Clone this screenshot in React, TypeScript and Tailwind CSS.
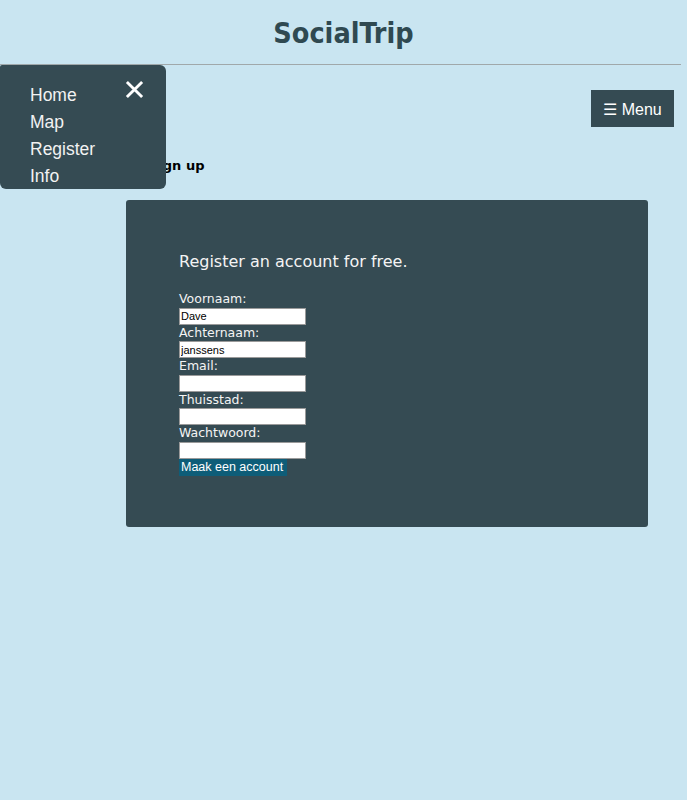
import { useState } from 'react';

const FIELDS = [
  { label: 'Voornaam:', value: 'Dave' },
  { label: 'Achternaam:', value: 'janssens' },
  { label: 'Email:', value: '' },
  { label: 'Thuisstad:', value: '' },
  { label: 'Wachtwoord:', value: '', type: 'password' },
];

const NAV = ['Home', 'Map', 'Register', 'Info'];

export default function App() {
  const [open, setOpen] = useState(true);

  return (
    <div className="relative min-h-[800px] bg-[#c9e5f1] font-['Liberation_Sans',Arial,sans-serif]">
      {/* Header */}
      <div className="h-[64px] flex items-center justify-center pt-[3px]">
        <h1 className="text-[28.5px] leading-[34px] font-bold text-[#2f4951] font-['DejaVu_Sans_Condensed','DejaVu_Sans',sans-serif]">SocialTrip</h1>
      </div>
      <div className="border-t border-[#a0a8aa] mr-[6px]" />

      {/* Menu button */}
      <div className="flex justify-end mt-[25px] pr-[13px]">
        <button onClick={() => setOpen(true)} className="h-[37px] w-[83px] bg-[#354b53] text-white text-[16px] leading-none pt-[2px]">☰ Menu</button>
      </div>

      <p className="mt-[31px] ml-[149px] text-[13px] leading-[16px] font-bold text-black font-['DejaVu_Sans',sans-serif]">Sign up</p>

      {/* Register card */}
      <div className="mt-[26px] ml-[126px] w-[522px] rounded-[3px] bg-[#354b53] pl-[53px] pt-[52px] pb-[51px] font-['DejaVu_Sans',sans-serif] text-[#f4f4f4]">
        <h2 className="text-[16px] leading-[20px]">Register an account for free.</h2>
        <form className="mt-[19px] flex flex-col" onSubmit={e => e.preventDefault()}>
          {FIELDS.map(f => (
            <label key={f.label} className="flex flex-col">
              <span className="text-[12.5px] leading-[16.5px]">{f.label}</span>
              <input type={f.type || 'text'} defaultValue={f.value} className="h-[17px] w-[127px] bg-white border border-[#9a9a9a] px-[1px] text-[11px] text-black font-['Liberation_Sans',Arial,sans-serif] outline-none" />
            </label>
          ))}
          <button type="submit" className="h-[17px] w-[108px] bg-[#0e5d78] text-white text-[12.5px] leading-[17px] text-left pl-[2px] font-['Liberation_Sans',Arial,sans-serif]">Maak een account</button>
        </form>
      </div>

      {/* Side nav overlay */}
      {open && (
        <div className="absolute left-0 top-[65px] w-[166px] h-[124px] rounded-r-[6px] rounded-bl-[6px] rounded-tl-[2px] bg-[#354b53]">
          <button onClick={() => setOpen(false)} className="absolute left-[125px] top-[14px] w-[20px] h-[20px] text-white">
            <svg width="19" height="19" viewBox="0 0 20 20" fill="none" stroke="currentColor" strokeWidth="3" strokeLinecap="butt">
              <path d="M2 2 L18 18 M18 2 L2 18" />
            </svg>
          </button>
          <nav className="absolute left-[30px] top-[17px] flex flex-col">
            {NAV.map(n => (
              <a key={n} href="#" className="text-[17.5px] leading-[27px] text-[#f2f2f2]">{n}</a>
            ))}
          </nav>
        </div>
      )}
    </div>
  );
}
